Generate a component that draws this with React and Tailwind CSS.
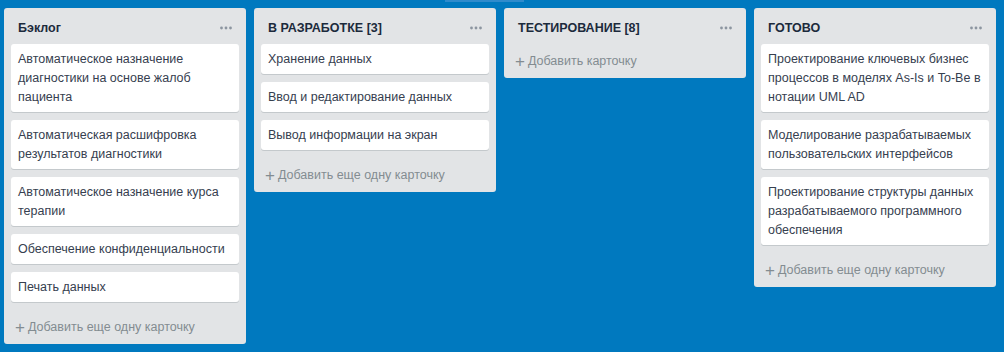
import React from 'react'

const lists = [
  {
    title: 'Бэклог',
    cards: [
      'Автоматическое назначение диагностики на основе жалоб пациента',
      'Автоматическая расшифровка результатов диагностики',
      'Автоматическое назначение курса терапии',
      'Обеспечение конфиденциальности',
      'Печать данных',
    ],
    add: 'Добавить еще одну карточку',
  },
  {
    title: 'В РАЗРАБОТКЕ [3]',
    cards: ['Хранение данных', 'Ввод и редактирование данных', 'Вывод информации на экран'],
    add: 'Добавить еще одну карточку',
  },
  {
    title: 'ТЕСТИРОВАНИЕ [8]',
    cards: [],
    add: 'Добавить карточку',
  },
  {
    title: 'ГОТОВО',
    cards: [
      'Проектирование ключевых бизнес процессов в моделях As-Is и To-Be в нотации UML AD',
      'Моделирование разрабатываемых пользовательских интерфейсов',
      'Проектирование структуры данных разрабатываемого программного обеспечения',
    ],
    add: 'Добавить еще одну карточку',
  },
]

function Dots() {
  return (
    <svg width="12" height="4" viewBox="0 0 12 4" className="mr-[2px]">
      <circle cx="1.5" cy="2" r="1.4" fill="#8c95a0" />
      <circle cx="6" cy="2" r="1.4" fill="#8c95a0" />
      <circle cx="10.5" cy="2" r="1.4" fill="#8c95a0" />
    </svg>
  )
}

function List({ list }) {
  return (
    <div className="w-[242px] shrink-0 rounded-[3px] bg-[#e2e4e6]">
      <div className="flex items-center justify-between pl-[14px] pr-[12px] pt-[11px] pb-[7px]">
        <h2 className="text-[12.5px] leading-[18px] font-bold text-[#1c2a3c]">{list.title}</h2>
        <Dots />
      </div>
      <div className="px-[7px]">
        {list.cards.map((c, i) => (
          <div key={i} className="mb-2 rounded-[3px] bg-white px-[7px] pt-[6px] pb-[5px] text-[12.5px] leading-[19px] text-[#36404f] shadow-[0_1px_0_#c4c9cc]">
            {c}
          </div>
        ))}
      </div>
      <div className="flex h-[34px] items-center pl-[11px] text-[12.5px] text-[#838c91]">
        <span className="mr-[3px] text-[17px] leading-none">+</span>
        <span>{list.add}</span>
      </div>
    </div>
  )
}

export default function App() {
  return (
    <div className="h-[352px] w-full overflow-hidden bg-[#0079bf] font-['Liberation_Sans',Arial,sans-serif]">
      <div className="h-2">
        <div className="ml-[445px] h-[2px] w-[79px] bg-[#2f8bcc]" />
      </div>
      <div className="flex items-start gap-2 pl-[4px]">
        {lists.map((l, i) => <List key={i} list={l} />)}
      </div>
    </div>
  )
}
